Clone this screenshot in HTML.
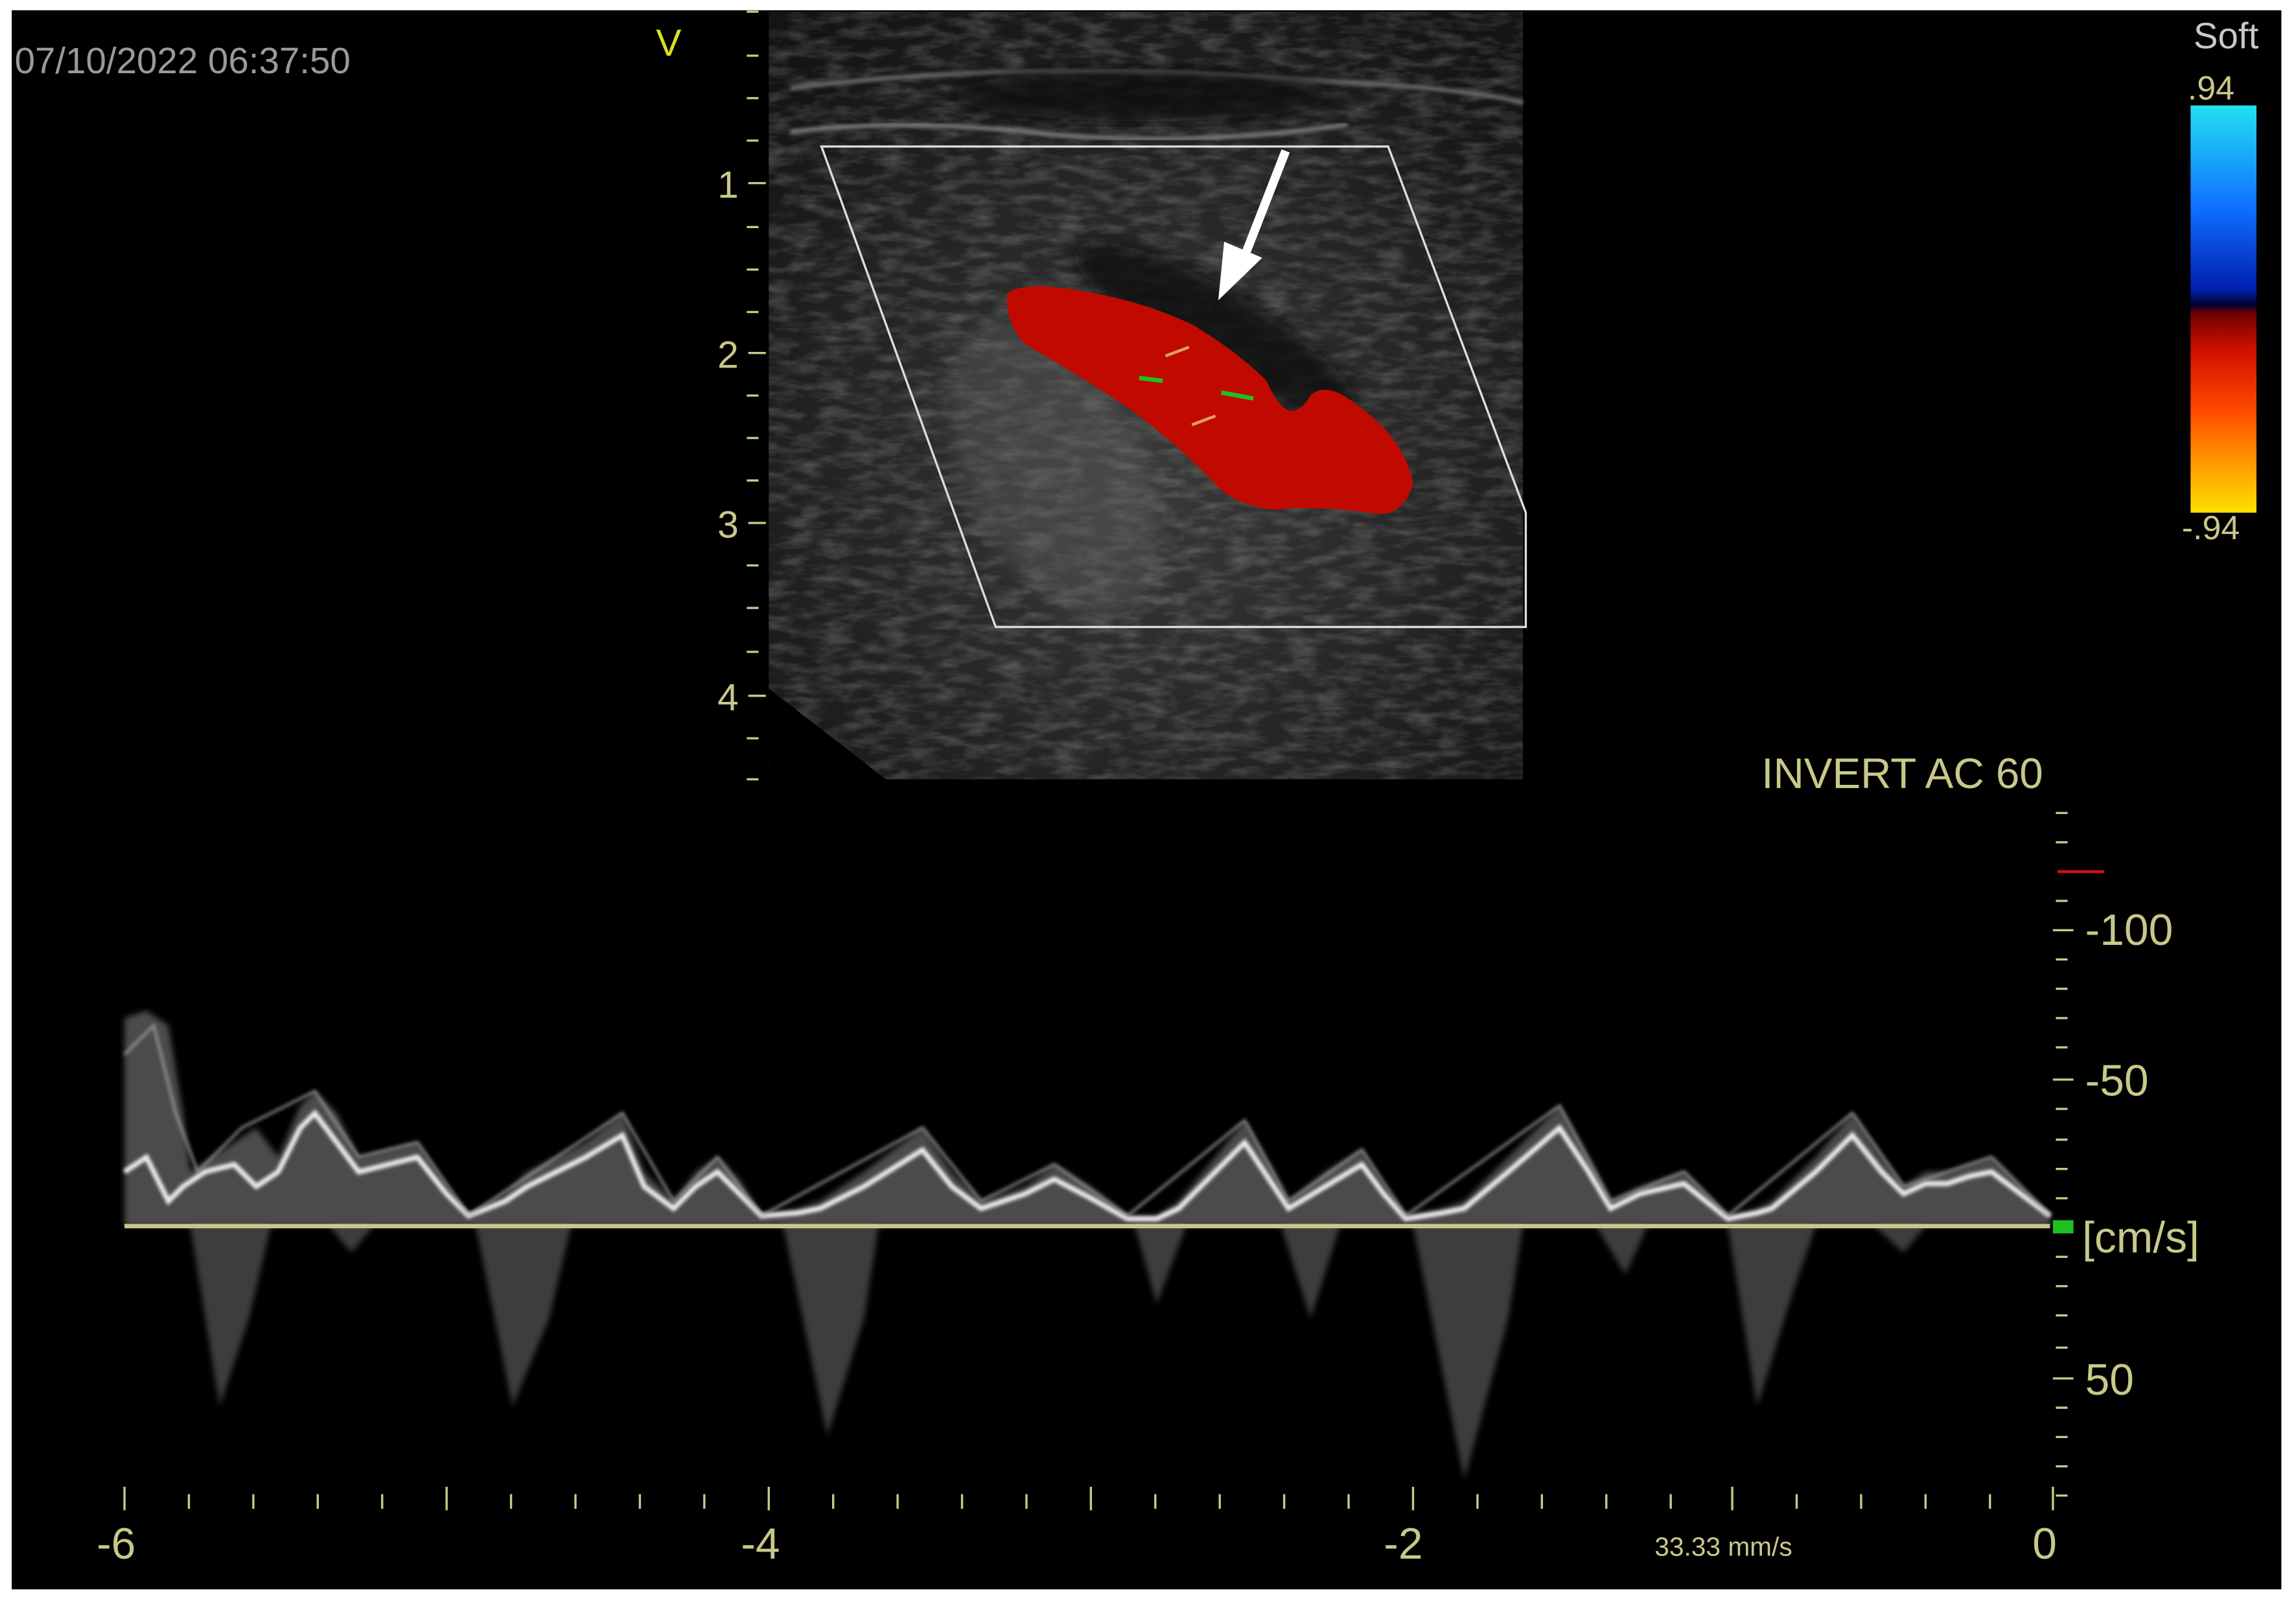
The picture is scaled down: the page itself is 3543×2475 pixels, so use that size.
<!DOCTYPE html>
<html><head><meta charset="utf-8"><style>
html,body{margin:0;padding:0;background:#fff;}
svg{display:block;}
text{font-family:"Liberation Sans","DejaVu Sans",sans-serif;}
</style></head><body>
<svg width="3543" height="2475" viewBox="0 0 1568 1095" preserveAspectRatio="none" xmlns="http://www.w3.org/2000/svg">
<defs>
<filter id="noise" x="0" y="0" width="100%" height="100%">
<feTurbulence type="fractalNoise" baseFrequency="0.05 0.15" numOctaves="3" seed="4" result="t"/>
<feColorMatrix in="t" type="matrix" values="0 0 0 0 0.5  0 0 0 0 0.5  0 0 0 0 0.5  0 0 0 1.3 -0.5"/>
<feComposite in2="SourceGraphic" operator="in"/>
</filter>
<filter id="blur2"><feGaussianBlur stdDeviation="2"/></filter>
<filter id="blur4"><feGaussianBlur stdDeviation="6"/></filter>
<filter id="blur1"><feGaussianBlur stdDeviation="1.2"/></filter>
<radialGradient id="us" cx="0.5" cy="0.6" r="0.7">
<stop offset="0" stop-color="#3a3a3a"/><stop offset="1" stop-color="#141414"/>
</radialGradient>
<linearGradient id="cb" x1="0" y1="0" x2="0" y2="1">
<stop offset="0" stop-color="#22e0f0"/><stop offset="0.25" stop-color="#1070ff"/><stop offset="0.45" stop-color="#0020b0"/><stop offset="0.49" stop-color="#000030"/>
<stop offset="0.51" stop-color="#700000"/><stop offset="0.6" stop-color="#d01000"/><stop offset="0.75" stop-color="#ff4a00"/><stop offset="0.88" stop-color="#ff9a00"/><stop offset="1" stop-color="#ffe000"/>
</linearGradient>
</defs>
<rect width="1568" height="1095" fill="#fff"/>
<rect x="8" y="7" width="1550" height="1078" fill="#000"/>
<rect x="525" y="8" width="515" height="524" fill="url(#us)"/>
<rect x="525" y="8" width="515" height="524" fill="#fff" filter="url(#noise)" opacity="0.45"/>
<path d="M525 470 L605 532 L525 532Z" fill="#000"/>
<path d="M540 60 Q700 40 900 55 Q1000 60 1040 70" stroke="#666" stroke-width="3" fill="none" filter="url(#blur1)"/>
<path d="M540 90 Q620 80 720 92 Q820 100 920 85" stroke="#777" stroke-width="3" fill="none" filter="url(#blur1)"/>
<ellipse cx="780" cy="65" rx="130" ry="18" fill="#080808" opacity="0.8" filter="url(#blur4)"/>
<ellipse cx="830" cy="225" rx="110" ry="28" transform="rotate(30 830 225)" fill="#080808" opacity="0.8" filter="url(#blur4)"/>
<ellipse cx="720" cy="320" rx="60" ry="110" transform="rotate(-25 720 320)" fill="#666" opacity="0.35" filter="url(#blur4)"/>
<path d="M688 200 Q700 192 735 198 Q780 205 815 222 Q845 240 865 260 Q880 295 895 270 Q905 260 925 275 Q960 300 965 330 Q958 355 935 350 Q900 345 870 348 Q840 345 825 325 Q800 300 770 278 Q735 255 700 235 Q686 220 688 200Z" fill="#c00a00"/>
<path d="M778 258 L794 260 M834 268 L856 272" stroke="#20c020" stroke-width="3"/>
<path d="M796 243 L812 237 M814 290 L830 284" stroke="#e0a060" stroke-width="2"/>
<path d="M561 100 L948 100 L1042 350 L1042 428 L680 428 Z" fill="none" stroke="#ddd" stroke-width="1.5"/>
<path d="M878 103 L848 180" stroke="#fff" stroke-width="6"/>
<path d="M832 205 L836 165 L862 176Z" fill="#fff"/>
<g stroke="#c8c88a" stroke-width="1.5">
<path d="M510 8h8 M510 38h8 M510 67h8 M510 96h8 M511 125h12 M510 155h8 M510 184h8 M510 213h8 M511 241h12 M510 270h8 M510 299h8 M510 328h8 M511 357h12 M510 386h8 M510 415h8 M510 445h8 M511 475h12 M510 504h8 M510 532h8"/>
</g>
<g fill="#c8c88a" font-size="26">
<text x="490" y="135">1</text><text x="490" y="251">2</text><text x="490" y="367">3</text><text x="490" y="485">4</text>
</g>
<text x="448" y="38" fill="#d8e020" font-size="26">V</text>
<text x="10" y="50" fill="#9a9a9a" font-size="25">07/10/2022 06:37:50</text>
<text x="1498" y="33" fill="#c8c8c8" font-size="25">Soft</text>
<text x="1494" y="68" fill="#c8c88a" font-size="23">.94</text>
<rect x="1496" y="72" width="45" height="278" fill="url(#cb)"/>
<text x="1490" y="368" fill="#c8c88a" font-size="23">-.94</text>
<text x="1203" y="538" fill="#c8c88a" font-size="29">INVERT  AC 60</text>
<g filter="url(#blur2)">
<polygon fill="#bbb" opacity="0.4" points="85,837 85,695 100,690 115,700 125,760 130,800 145,790 160,780 175,770 190,790 205,755 215,745 230,760 245,790 265,785 285,780 305,810 320,830 345,815 360,800 380,790 400,780 425,760 440,800 460,820 475,800 490,790 505,805 520,830 545,825 560,820 590,800 630,770 650,800 670,820 700,810 720,795 745,810 770,830 790,830 805,820 830,790 850,765 870,800 880,820 905,800 930,785 945,810 960,830 985,825 1000,820 1030,790 1065,755 1085,790 1100,820 1120,810 1150,800 1165,815 1180,830 1200,825 1210,820 1240,790 1265,760 1285,790 1300,810 1315,800 1330,800 1345,795 1360,790 1380,810 1400,830 1400,837"/>
<g fill="#999" opacity="0.4">
<polygon points="130,837 150,960 170,900 185,837"/>
<polygon points="325,837 350,960 375,900 390,837"/>
<polygon points="535,837 565,980 590,900 600,837"/>
<polygon points="775,837 790,890 810,837"/>
<polygon points="875,837 895,900 915,837"/>
<polygon points="965,837 1000,1010 1030,900 1040,837"/>
<polygon points="1180,837 1200,960 1225,880 1240,837"/>
<polygon points="225,837 240,855 255,837 1090,837 1110,870 1125,837 1280,837 1300,855 1315,837"/>
</g>
</g>
<polyline fill="none" stroke="#eee" stroke-width="3.5" filter="url(#blur1)" points="85,800 100,790 115,820 125,810 140,800 160,795 175,810 190,800 205,770 215,760 230,780 245,800 265,795 285,790 305,815 320,830 345,820 360,810 380,800 400,790 425,775 440,810 460,825 475,810 490,800 505,815 520,830 545,828 560,825 590,810 630,785 650,810 670,825 700,815 720,805 745,818 770,832 790,832 805,825 830,800 850,780 870,810 880,825 905,810 930,795 945,815 960,832 985,828 1000,825 1030,800 1065,770 1085,800 1100,825 1120,815 1150,808 1165,820 1180,832 1200,828 1210,825 1240,800 1265,775 1285,800 1300,815 1315,808 1330,808 1345,803 1360,800 1380,815 1400,830"/>
<polyline fill="none" stroke="#aaa" stroke-width="2" opacity="0.7" filter="url(#blur1)" points="85,720 105,700 120,760 135,800 165,770 215,745 245,790 285,780 320,830 380,790 425,760 460,820 490,790 520,830 630,770 670,820 720,795 770,830 850,765 880,820 930,785 960,830 1065,755 1100,820 1150,800 1180,830 1265,760 1300,810 1360,790 1400,830"/>
<line x1="85" y1="837" x2="1400" y2="837" stroke="#c8c88a" stroke-width="3"/>
<rect x="1402" y="833" width="14" height="9" fill="#20c020"/>
<line x1="1405" y1="595" x2="1437" y2="595" stroke="#d01010" stroke-width="2"/>
<g stroke="#c8c88a" stroke-width="1.5">
<path d="M1404 555h8 M1404 575h8 M1404 615h8 M1402 635h14 M1404 655h8 M1404 675h8 M1404 695h8 M1404 715h8 M1402 737h14 M1404 757h8 M1404 778h8 M1404 798h8 M1404 818h8 M1404 858h8 M1404 878h8 M1404 898h8 M1404 920h8 M1402 941h14 M1404 961h8 M1404 981h8 M1404 1001h8 M1404 1021h8"/>
</g>
<g fill="#c8c88a" font-size="30">
<text x="1424" y="645">-100</text><text x="1424" y="748">-50</text><text x="1422" y="855">[cm/s]</text><text x="1424" y="952">50</text>
</g>
<g stroke="#c8c88a" stroke-width="1.5">
<path d="M85 1015v16 M129 1020v10 M173 1020v10 M217 1020v10 M261 1020v10 M305 1015v16 M349 1020v10 M393 1020v10 M437 1020v10 M481 1020v10 M525 1015v16 M569 1020v10 M613 1020v10 M657 1020v10 M701 1020v10 M745 1015v16 M789 1020v10 M833 1020v10 M877 1020v10 M921 1020v10 M965 1015v16 M1009 1020v10 M1053 1020v10 M1097 1020v10 M1141 1020v10 M1183 1015v16 M1227 1020v10 M1271 1020v10 M1315 1020v10 M1359 1020v10 M1402 1015v16"/>
</g>
<g fill="#c8c88a" font-size="30">
<text x="66" y="1064">-6</text><text x="506" y="1064">-4</text><text x="945" y="1064">-2</text><text x="1388" y="1064">0</text>
</g>
<text x="1130" y="1062" fill="#c8c88a" font-size="18">33.33 mm/s</text>
</svg>
</body></html>
